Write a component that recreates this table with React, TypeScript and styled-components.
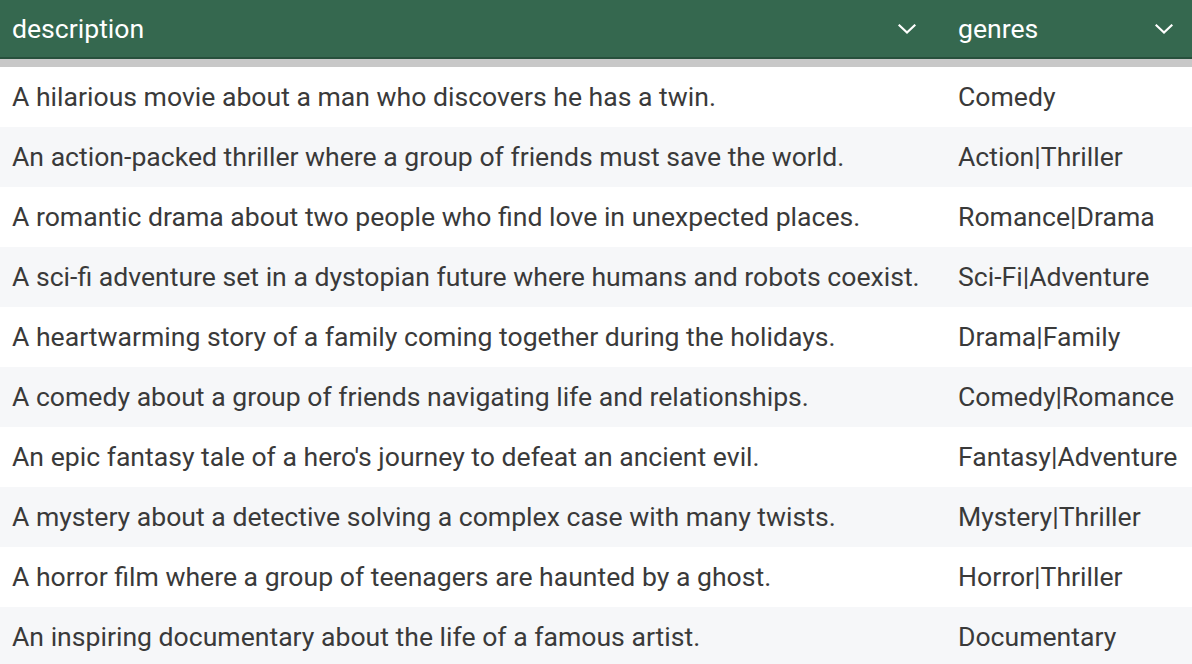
import styled, { createGlobalStyle } from 'styled-components';

const rows = [
  ['A hilarious movie about a man who discovers he has a twin.', 'Comedy'],
  ['An action-packed thriller where a group of friends must save the world.', 'Action|Thriller'],
  ['A romantic drama about two people who find love in unexpected places.', 'Romance|Drama'],
  ['A sci-fi adventure set in a dystopian future where humans and robots coexist.', 'Sci-Fi|Adventure'],
  ['A heartwarming story of a family coming together during the holidays.', 'Drama|Family'],
  ['A comedy about a group of friends navigating life and relationships.', 'Comedy|Romance'],
  ["An epic fantasy tale of a hero's journey to defeat an ancient evil.", 'Fantasy|Adventure'],
  ['A mystery about a detective solving a complex case with many twists.', 'Mystery|Thriller'],
  ['A horror film where a group of teenagers are haunted by a ghost.', 'Horror|Thriller'],
  ['An inspiring documentary about the life of a famous artist.', 'Documentary'],
];

const GlobalStyle = createGlobalStyle`
  html, body {
    margin: 0;
    padding: 0;
    background: #fff;
    overflow: hidden;
  }
  body {
    font-family: Roboto, "Liberation Sans", sans-serif;
  }
`;

const Table = styled.div`
  width: 1210px;
  display: flex;
  flex-direction: column;
`;

const HeaderRow = styled.div`
  display: grid;
  grid-template-columns: 946px 257px;
  height: 57px;
  background: #35684f;
  border-bottom: 2px solid #27503c;
`;

const HeaderCell = styled.div`
  display: flex;
  align-items: center;
  justify-content: space-between;
  padding: 0 30px 0 12px;
  color: #fff;
  font-size: 26.6px;
  font-weight: 400;
`;

const Divider = styled.div`
  height: 8px;
  background: #c8c8c8;
`;

const Row = styled.div<{ $striped: boolean }>`
  display: grid;
  grid-template-columns: 946px 257px;
  height: 60px;
  background: ${({ $striped }) => ($striped ? '#f6f7f9' : '#ffffff')};
`;

const Cell = styled.div`
  display: flex;
  align-items: center;
  padding: 0 12px 2px;
  color: #3a3a3a;
  font-size: 26.6px;
  white-space: nowrap;
  overflow: hidden;
`;

function Chevron() {
  return (
    <svg width="18" height="10" viewBox="0 0 18 10" fill="none">
      <path d="M1.5 1.5 L9 8.5 L16.5 1.5" stroke="#fff" strokeWidth="2.2" strokeLinecap="square" />
    </svg>
  );
}

export default function App() {
  return (
    <>
      <GlobalStyle />
      <Table>
        <HeaderRow>
          <HeaderCell>
            <span>description</span>
            <Chevron />
          </HeaderCell>
          <HeaderCell>
            <span>genres</span>
            <Chevron />
          </HeaderCell>
        </HeaderRow>
        <Divider />
        {rows.map(([desc, genre], i) => (
          <Row key={desc} $striped={i % 2 === 1}>
            <Cell>{desc}</Cell>
            <Cell>{genre}</Cell>
          </Row>
        ))}
      </Table>
    </>
  );
}
